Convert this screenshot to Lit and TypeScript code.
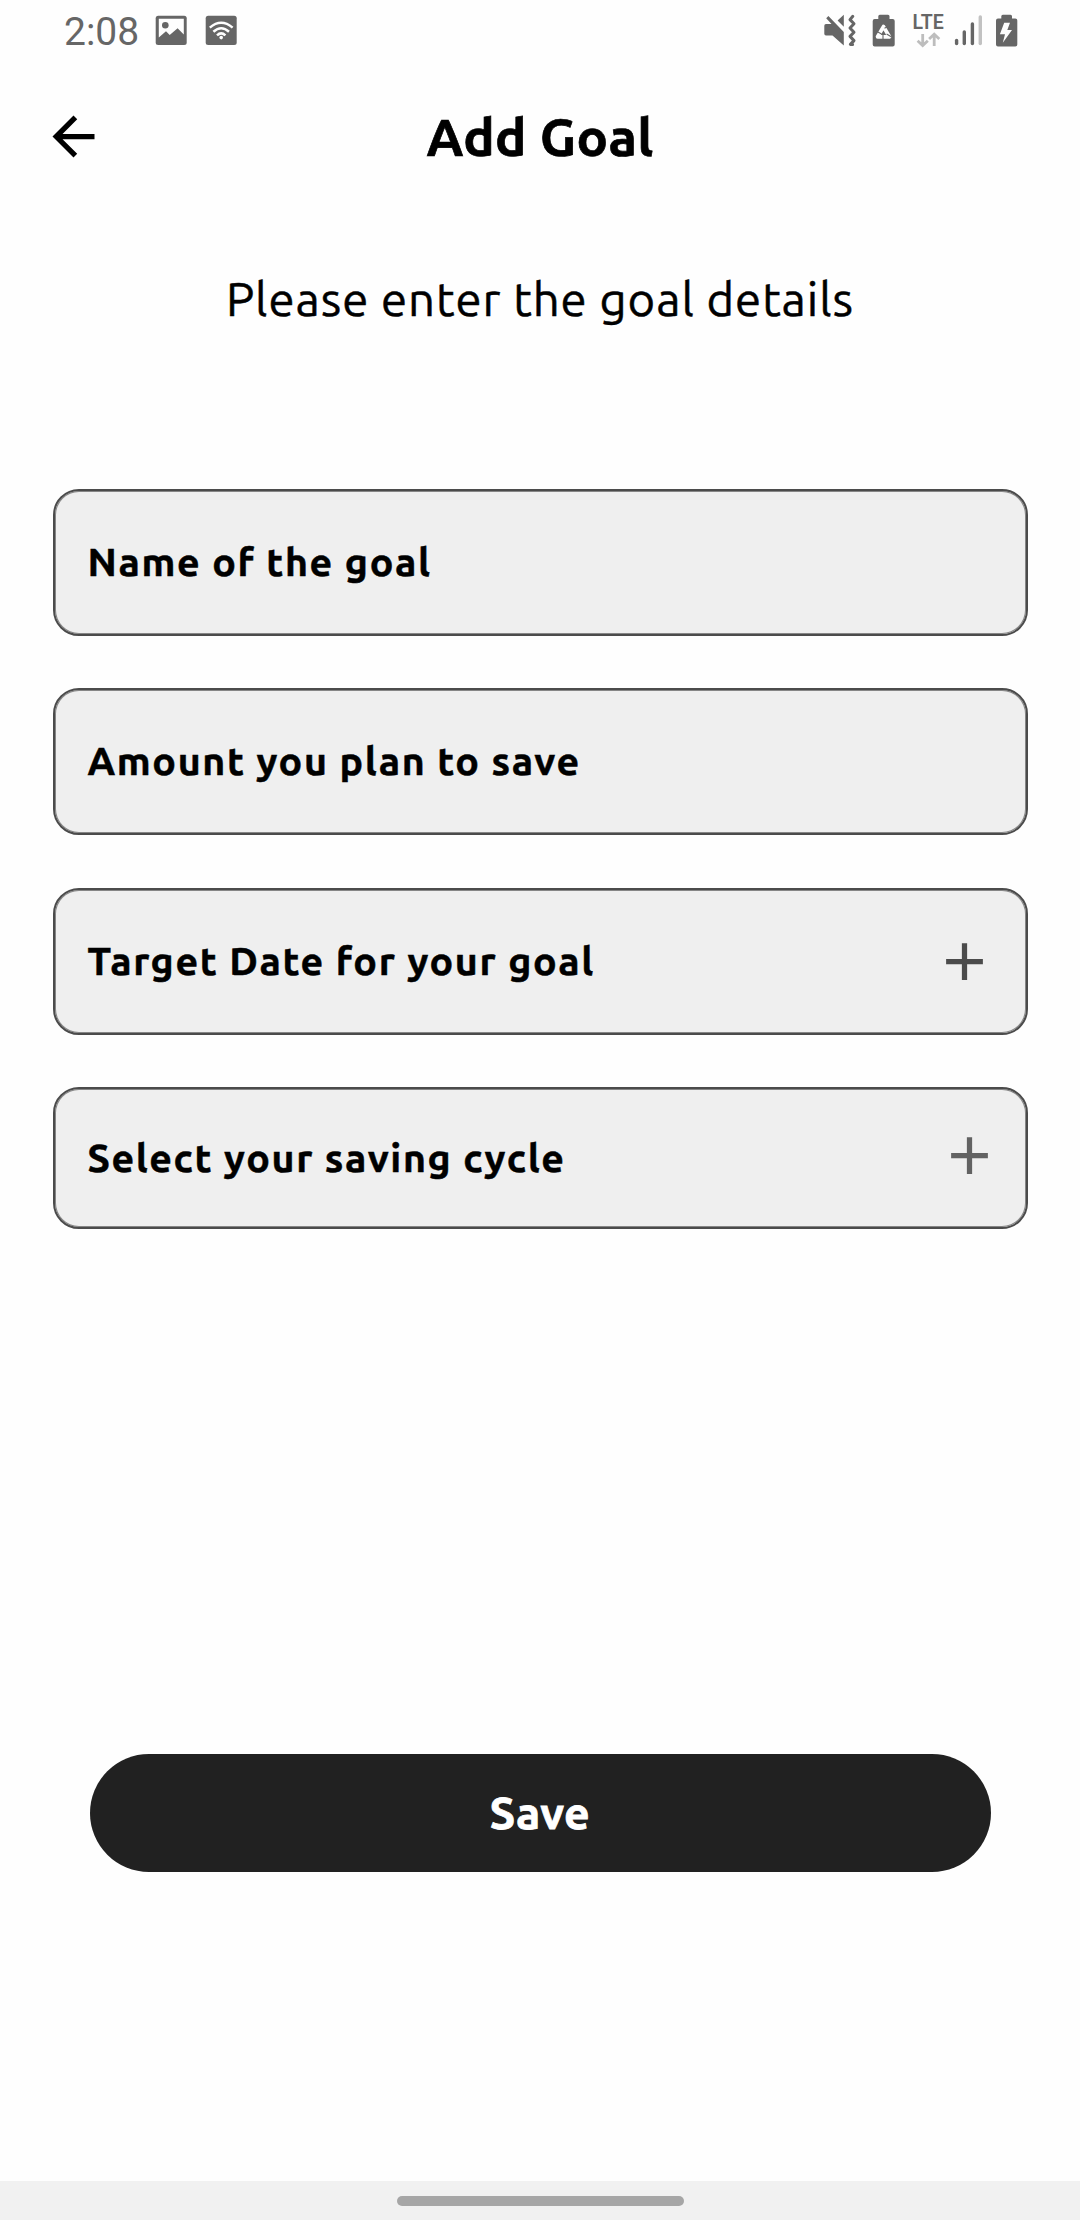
import { LitElement, html, css, svg, nothing } from "lit";
import { customElement, property } from "lit/decorators.js";

const plusPath = "M19 13h-6v6h-2v-6H5v-2h6V5h2v6h6v2z";

@customElement("status-bar")
export class StatusBar extends LitElement {
  static styles = css`
    :host {
      display: flex;
      justify-content: space-between;
      height: 63px;
      padding: 0 62px 0 64px;
      box-sizing: border-box;
      color: #666;
      font-family: Roboto, "Noto Sans", sans-serif;
    }
    .group {
      display: flex;
      align-items: flex-start;
    }
    .time {
      font-size: 39px;
      line-height: 46px;
      padding-top: 9px;
      width: 91px;
    }
    svg {
      display: block;
      fill: currentColor;
    }
    .lte {
      font-size: 19.5px;
      font-weight: 600;
    }
    .cut {
      fill: #fefefe;
    }
    .line {
      fill: none;
      stroke: currentColor;
    }
    .white-line {
      fill: none;
      stroke: #fefefe;
    }
    .faint {
      fill: none;
      stroke: #bdbdbd;
    }
    .bar {
      fill: none;
      stroke: currentColor;
      stroke-width: 3.4;
      stroke-linecap: round;
    }
    .bar.off {
      stroke: #c2c2c2;
    }
  `;

  render() {
    return html`
      <div class="group">
        <span class="time">2:08</span>
        <svg width="85" height="60" viewBox="155 0 85 60">
          <rect x="155.7" y="15.8" width="31" height="29.2" rx="2.5" />
          <path class="cut" d="M158.8 18.8H183.8V34.5L177.6 28.2L169.7 35L166 31.2L158.8 37.5Z" />
          <circle cx="165.3" cy="25.3" r="3.3" />
          <rect x="205.7" y="15.8" width="31" height="29.2" rx="2.5" />
          <g class="white-line" stroke-width="2.5">
            <path d="M209.8 27.6Q221.2 18 232.6 27.6" />
            <path d="M213.4 31.8Q221.2 24.8 229 31.8" />
            <path d="M217 35.4Q221.2 31.4 225.4 35.4" />
          </g>
          <circle class="cut" cx="221.2" cy="37.6" r="1.8" />
        </svg>
      </div>
      <div class="group">
        <svg width="196" height="60" viewBox="822 0 196 60">
          <path d="M824.3 25.7Q824.3 24 826 24H831.5L826.2 18.2L828.4 16L843.8 32V45.5L832.5 35.5H826Q824.3 35.5 824.3 33.8Z" />
          <path d="M837.6 20.5L843.8 14.8V26.7Z" />
          <path class="line" stroke-width="3" stroke-linejoin="round" stroke-linecap="round"
            d="M852.8 16.3L850 19.6L854 23.8L850 28L854 32.2L850 36.4L854 40.6L850.4 44.4H852.6" />
          <path d="M878.3 19V16.2Q878.3 14.7 879.8 14.7H888Q889.5 14.7 889.5 16.2V19H892.7Q894.7 19 894.7 21V44.5Q894.7 46.5 892.7 46.5H874.7Q872.7 46.5 872.7 44.5V21Q872.7 19 874.7 19Z" />
          <path class="white-line" stroke-width="3.8" stroke-linejoin="round" d="M883.5 26.6L889.4 36.8H877.6Z" />
          <g class="line" stroke-width="1.1">
            <path d="M884.5 28.2L889.5 25.6" />
            <path d="M886.6 34L891.6 37" />
            <path d="M883 34.6V40" />
            <path d="M876.5 31.3L881.5 34" />
          </g>
          <text class="lte" x="912.6" y="28.6">LTE</text>
          <g class="faint" stroke-width="2.8">
            <path d="M922.7 34V45.5M917.6 40.8L922.7 45.6L927.8 40.8" />
            <path d="M934.2 46V34.5M929.1 39L934.2 34.2L939.3 39" />
          </g>
          <path class="bar" d="M956.6 40.5V43.5" />
          <path class="bar" d="M964.3 32V43.5" />
          <path class="bar" d="M972.4 24V43.5" />
          <path class="bar off" d="M980.3 17V43.5" />
          <path d="M1001.3 18.5V16.2Q1001.3 14.7 1002.8 14.7H1010.5Q1012 14.7 1012 16.2V18.5H1015.3Q1017.3 18.5 1017.3 20.5V44.5Q1017.3 46.5 1015.3 46.5H998Q996 46.5 996 44.5V20.5Q996 18.5 998 18.5Z" />
          <path class="cut" d="M1004.2 22.8H1010L1007.3 30H1012L1002.8 42.7L1005 34.3H999.9Z" />
        </svg>
      </div>
    `;
  }
}

@customElement("goal-field")
export class GoalField extends LitElement {
  static styles = css`
    :host {
      display: block;
    }
    .box {
      display: flex;
      align-items: center;
      justify-content: space-between;
      box-sizing: border-box;
      height: 147px;
      padding: 0 29.5px 0 33px;
      border: 2px solid #4b4b4b;
      border-radius: 26px;
      background: #efefef;
      box-shadow: inset 0 0 0 1px #868686;
    }
    .label {
      padding-bottom: 3px;
      font-size: 39.375px;
      font-weight: 700;
      line-height: 46px;
      letter-spacing: 1.62px;
      color: #000;
      -webkit-text-stroke: 0.5px #000;
      white-space: nowrap;
    }
    svg {
      display: block;
      width: 63px;
      height: 63px;
      fill: #4b4b4b;
    }
    .box.select {
      height: 142px;
      padding-right: 24.5px;
    }
    .select .label {
      padding-bottom: 2px;
    }
    .select svg {
      margin-bottom: 5px;
      fill: #626262;
    }
  `;

  @property() label = "";
  @property() kind: "text" | "date" | "select" = "text";

  render() {
    return html`
      <div class="box ${this.kind}">
        <span class="label">${this.label}</span>
        ${this.kind === "text"
          ? nothing
          : html`<svg viewBox="0 0 24 24">${svg`<path d=${plusPath} />`}</svg>`}
      </div>
    `;
  }
}

@customElement("app-root")
export class AppRoot extends LitElement {
  static styles = css`
    :host {
      display: flex;
      flex-direction: column;
      box-sizing: border-box;
      height: 2220px;
      background: #fefefe;
      color: #000;
      font-family: Ubuntu, "Noto Sans", "Open Sans", sans-serif;
    }
    header {
      display: grid;
      grid-template-columns: 1fr auto 1fr;
      align-items: center;
      height: 147px;
      padding: 0 42px;
    }
    .back {
      display: block;
      width: 63px;
      height: 63px;
      fill: #000;
    }
    h1 {
      margin: 0;
      font-size: 52.5px;
      font-weight: 700;
      line-height: 59px;
      letter-spacing: 0.36px;
      -webkit-text-stroke: 0.7px #000;
    }
    .intro {
      margin: 58px 0 0;
      font-size: 47.25px;
      line-height: 61px;
      letter-spacing: 0.96px;
      text-align: center;
      -webkit-text-stroke: 0.5px #000;
    }
    .fields {
      display: flex;
      flex-direction: column;
      gap: 52.5px;
      padding: 159.7px 52.5px 0;
    }
    .save {
      height: 118px;
      margin: 525px 89.5px 0;
      padding: 0 0 2px;
      border: 0;
      border-radius: 59px;
      background: #212121;
      color: #fff;
      font-family: inherit;
      font-size: 44.625px;
      font-weight: 700;
      letter-spacing: 0.5px;
      -webkit-text-stroke: 0.8px #fff;
    }
    .nav {
      display: flex;
      justify-content: center;
      align-items: center;
      height: 39px;
      margin-top: auto;
      background: #f1f1f1;
    }
    .handle {
      width: 287px;
      height: 10px;
      border-radius: 5px;
      background: #a6a6a6;
    }
  `;

  render() {
    return html`
      <status-bar></status-bar>
      <header>
        <svg class="back" viewBox="0 0 24 24">
          <path d="M20 11H7.83l5.59-5.59L12 4l-8 8 8 8 1.41-1.41L7.83 13H20v-2z" />
        </svg>
        <h1>Add Goal</h1>
      </header>
      <p class="intro">Please enter the goal details</p>
      <div class="fields">
        <goal-field label="Name of the goal"></goal-field>
        <goal-field label="Amount you plan to save"></goal-field>
        <goal-field label="Target Date for your goal" kind="date"></goal-field>
        <goal-field label="Select your saving cycle" kind="select"></goal-field>
      </div>
      <button class="save">Save</button>
      <div class="nav"><div class="handle"></div></div>
    `;
  }
}
